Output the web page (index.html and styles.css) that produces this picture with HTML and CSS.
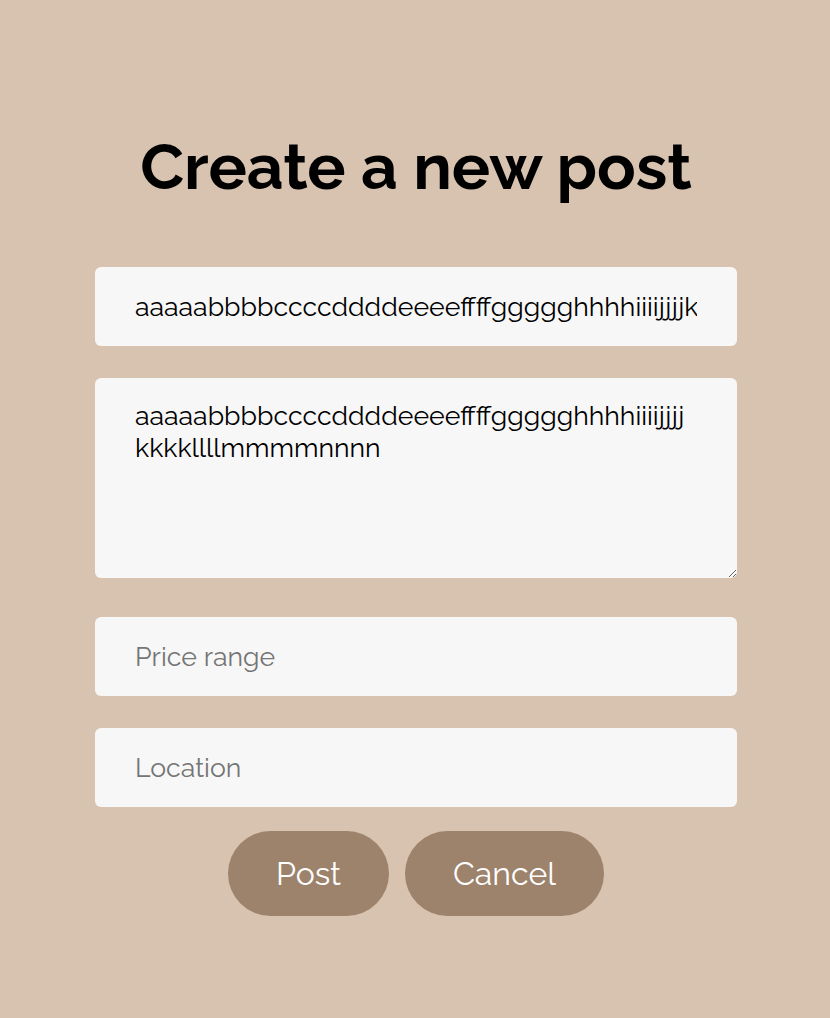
FILE: index.html
```html
<!DOCTYPE html>
<html lang="en">
<head>
<meta charset="utf-8">
<title>Create a new post</title>
<link rel="stylesheet" href="styles.css">
</head>
<body>
<main class="page">
  <h1 class="title">Create a new post</h1>
  <form class="post-form">
    <div class="fields">
      <input class="field" type="text" placeholder="Title" value="aaaaabbbbccccddddeeeeffffggggghhhhiiiijjjjkkkkllllmmmmnnnn">
      <textarea class="field field-area" placeholder="Description">aaaaabbbbccccddddeeeeffffggggghhhhiiiijjjj
kkkkllllmmmmnnnn</textarea>
      <input class="field" type="text" placeholder="Price range">
      <input class="field" type="text" placeholder="Location">
    </div>
    <div class="actions">
      <button type="button" class="btn">Post</button>
      <button type="button" class="btn">Cancel</button>
    </div>
  </form>
</main>
</body>
</html>
```

FILE: styles.css
```css
html, body {
  margin: 0;
  padding: 0;
}

body {
  background: #d8c2b0;
  font-family: "Raleway", "Lato", "Open Sans", sans-serif;
  color: #000;
  padding-left: 2px;
}

.page {
  width: 642px;
  margin: 0 auto;
  padding-top: 128px;
}

.title {
  margin: 0 0 62px;
  font-size: 64px;
  line-height: 77px;
  font-weight: 700;
  text-align: center;
}

.post-form {
  display: flex;
  flex-direction: column;
}

.fields {
  display: flex;
  flex-direction: column;
  gap: 32px;
}

.field {
  display: block;
  box-sizing: border-box;
  width: 100%;
  height: 79px;
  margin: 0;
  padding: 0 40px;
  border: none;
  border-radius: 6px;
  background: #f7f7f7;
  font-family: inherit;
  font-size: 26.67px;
  color: #000;
  outline: none;
}

.field::placeholder {
  color: #757575;
}

.field-area {
  height: 200px;
  padding: 22px 40px;
  line-height: 32px;
  margin-bottom: 7px;
  resize: vertical;
  overflow: hidden;
}

.actions {
  display: flex;
  justify-content: center;
  gap: 16px;
  margin-top: 24px;
}

.btn {
  height: 85px;
  padding: 0 48px;
  border: none;
  border-radius: 43px;
  background: #9d826c;
  color: #fff;
  font-family: inherit;
  font-size: 32px;
  cursor: pointer;
}
```
